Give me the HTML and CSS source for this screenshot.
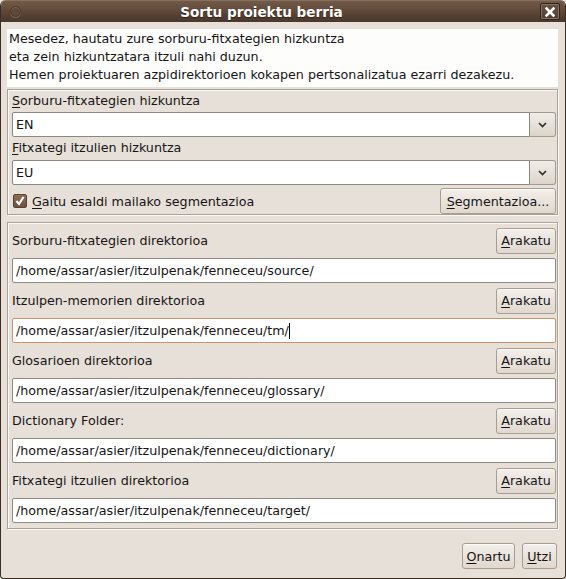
FILE: index.html
```html
<!DOCTYPE html>
<html>
<head>
<meta charset="utf-8">
<link rel="stylesheet" href="styles.css">
</head>
<body>
<div class="window">
  <div class="titlebar">
    <span class="tb-circle"></span>
    <span class="title">Sortu proiektu berria</span>
    <span class="close">
      <svg width="10" height="10" viewBox="0 0 10 10"><path d="M1.5 1.5 L8.5 8.5 M8.5 1.5 L1.5 8.5" stroke="#fff" stroke-width="2.6" stroke-linecap="square"/></svg>
    </span>
  </div>
  <div class="body">
    <div class="info">
      <div>Mesedez, hautatu zure sorburu-fitxategien hizkuntza</div>
      <div>eta zein hizkuntzatara itzuli nahi duzun.</div>
      <div>Hemen proiektuaren azpidirektorioen kokapen pertsonalizatua ezarri dezakezu.</div>
    </div>

    <div class="frame frame-lang">
      <div class="label first"><u>S</u>orburu-fitxategien hizkuntza</div>
      <div class="combo">
        <div class="combo-entry">EN</div>
        <div class="combo-btn"><svg width="9" height="6" viewBox="0 0 9 6"><path d="M1 1 L4.5 4.5 L8 1" fill="none" stroke="#2b2b2b" stroke-width="1.6"/></svg></div>
      </div>
      <div class="label"><u>F</u>itxategi itzulien hizkuntza</div>
      <div class="combo">
        <div class="combo-entry">EU</div>
        <div class="combo-btn"><svg width="9" height="6" viewBox="0 0 9 6"><path d="M1 1 L4.5 4.5 L8 1" fill="none" stroke="#2b2b2b" stroke-width="1.6"/></svg></div>
      </div>
      <div class="seg-row">
        <div class="check">
          <span class="box"><svg width="14" height="14" viewBox="0 0 14 14"><path d="M3.5 7 L6 10 L10.5 3" fill="none" stroke="#fff" stroke-width="2.2"/></svg></span>
          <span><u>G</u>aitu esaldi mailako segmentazioa</span>
        </div>
        <div class="btn btn-seg"><u>S</u>egmentazioa...</div>
      </div>
    </div>

    <div class="frame frame-dirs">
      <div class="dir-row">
        <div class="dir-head"><span>Sorburu-fitxategien direktorioa</span><div class="btn btn-browse"><u>A</u>rakatu</div></div>
        <div class="entry">/home/assar/asier/itzulpenak/fenneceu/source/</div>
      </div>
      <div class="dir-row">
        <div class="dir-head"><span>Itzulpen-memorien direktorioa</span><div class="btn btn-browse"><u>A</u>rakatu</div></div>
        <div class="entry focused">/home/assar/asier/itzulpenak/fenneceu/tm/<span class="caret"></span></div>
      </div>
      <div class="dir-row">
        <div class="dir-head"><span>Glosarioen direktorioa</span><div class="btn btn-browse"><u>A</u>rakatu</div></div>
        <div class="entry">/home/assar/asier/itzulpenak/fenneceu/glossary/</div>
      </div>
      <div class="dir-row">
        <div class="dir-head"><span>Dictionary Folder:</span><div class="btn btn-browse"><u>A</u>rakatu</div></div>
        <div class="entry">/home/assar/asier/itzulpenak/fenneceu/dictionary/</div>
      </div>
      <div class="dir-row">
        <div class="dir-head"><span>Fitxategi itzulien direktorioa</span><div class="btn btn-browse"><u>A</u>rakatu</div></div>
        <div class="entry">/home/assar/asier/itzulpenak/fenneceu/target/</div>
      </div>
    </div>

    <div class="actions">
      <div class="btn btn-ok"><u>O</u>nartu</div>
      <div class="btn btn-cancel"><u>U</u>tzi</div>
    </div>
  </div>
</div>
</body>
</html>
```
FILE: styles.css
```css
* { box-sizing: border-box; }
html, body {
  margin: 0;
  padding: 0;
  background: #e6e0d8;
}
body {
  font-family: "DejaVu Sans", sans-serif;
  font-size: 12.7px;
  color: #161416;
}
u {
  text-decoration: underline;
  text-underline-offset: 2px;
}
.window {
  width: 566px;
  height: 579px;
  background: #e6e0d8;
  border: 1px solid #3b2d23;
  border-top: none;
  border-radius: 6px 6px 4px 4px;
  overflow: hidden;
  display: flex;
  flex-direction: column;
}
.titlebar {
  height: 22px;
  flex: none;
  display: flex;
  align-items: center;
  position: relative;
  background: linear-gradient(#725a49 0%, #614a3b 45%, #543f32 70%, #4b382c 100%);
  border-top: 1px solid #87705f;
}
.tb-circle {
  width: 11px;
  height: 11px;
  border-radius: 50%;
  margin-left: 9px;
  border: 1px solid #4a382c;
  box-shadow: inset 0 1px 0 #7e6656, 0 1px 0 #7a6353;
  background: #5e4839;
}
.title {
  flex: 1;
  text-align: center;
  color: #fff;
  font-weight: bold;
  font-size: 13.6px;
  text-shadow: 0 1px 1px #2f221a;
  margin-right: 38px;
}
.close {
  width: 20px;
  height: 17px;
  margin-right: 5px;
  border: 1px solid #2e221b;
  box-shadow: inset 0 0 0 1px #8a7262;
  background: linear-gradient(#6a5343, #4f3b2f);
  border-radius: 2px;
  display: flex;
  align-items: center;
  justify-content: center;
}
.body {
  flex: 1;
  padding: 7px 7px 0 6px;
  display: flex;
  flex-direction: column;
}
.info {
  background: #fdfdfc;
  height: 58px;
  padding: 1px 1px 0 2px;
  line-height: 18px;
}
.frame {
  border: 1px solid #aaa196;
  box-shadow: inset 1px 1px 0 #fbfaf8, 1px 1px 0 #fbfaf8;
  padding: 0 1px 0 4px;
}
.frame-lang {
  margin-top: 2px;
  height: 126px;
}
.label {
  height: 23px;
  line-height: 22px;
}
.label.first {
  height: 22px;
  line-height: 21px;
}
.combo {
  display: flex;
  height: 25px;
}
.combo-entry {
  flex: 1;
  background: #fff;
  border: 1px solid #8f877e;
  border-radius: 2px 0 0 2px;
  padding-left: 3px;
  line-height: 23px;
}
.combo-btn {
  width: 26px;
  border: 1px solid #a39a8f;
  border-left: none;
  border-radius: 0 3px 3px 0;
  background: linear-gradient(#f1ede8, #ddd5cb);
  display: flex;
  align-items: center;
  justify-content: center;
}
.seg-row {
  margin-top: 3px;
  display: flex;
  align-items: center;
  justify-content: space-between;
}
.check {
  display: flex;
  align-items: center;
  gap: 5px;
  padding-left: 1px;
}
.box {
  width: 14px;
  height: 14px;
  border: 1px solid #5b4233;
  border-radius: 2px;
  background: linear-gradient(#8d6d58, #6e5040);
  display: flex;
  align-items: center;
  justify-content: center;
}
.box svg { display: block; margin: -1px; }
.btn {
  height: 26px;
  border: 1px solid #a89d91;
  border-radius: 3px;
  background: linear-gradient(#f3efea, #e0d8ce);
  box-shadow: inset 0 1px 0 #fbfaf8;
  display: flex;
  align-items: center;
  justify-content: center;
  padding: 0 2px;
  white-space: nowrap;
}
.btn-seg { width: 116px; }
.btn-browse { width: 60px; }
.btn-ok { width: 53px; }
.btn-cancel { width: 35px; }
.frame-dirs {
  margin-top: 7px;
  padding-top: 4px;
  padding-bottom: 5px;
}
.dir-row {
  display: flex;
  flex-direction: column;
  gap: 5px;
  margin-bottom: 4px;
}
.dir-row:last-child { margin-bottom: 0; }
.dir-head {
  display: flex;
  align-items: center;
  justify-content: space-between;
  height: 26px;
  padding-top: 1px;
}
.entry {
  height: 25px;
  background: #fff;
  border: 1px solid #928a81;
  border-radius: 2px;
  padding-left: 3px;
  line-height: 23px;
  display: flex;
  align-items: center;
}
.entry.focused {
  border-color: #c7946d;
}
.caret {
  display: inline-block;
  width: 1px;
  height: 16px;
  background: #000;
  margin-left: 0;
}
.actions {
  margin-top: 14px;
  display: flex;
  justify-content: flex-end;
  gap: 7px;
  padding-right: 1px;
}
```
